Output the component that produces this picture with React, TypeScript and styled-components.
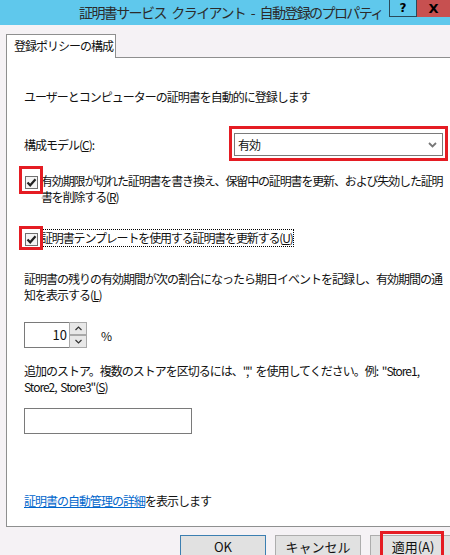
import React from 'react';
import styled, { createGlobalStyle } from 'styled-components';

const GlobalStyle = createGlobalStyle`
  html, body {
    margin: 0;
    padding: 0;
    background: #f5f2f5;
  }
  * {
    box-sizing: border-box;
  }
`;

const Window = styled.div`
  width: 450px;
  height: 555px;
  overflow: hidden;
  display: flex;
  flex-direction: column;
  background: #f5f2f5;
  font-family: "Noto Sans CJK JP", "Noto Sans", sans-serif;
  font-size: 12px;
  letter-spacing: -1px;
  word-spacing: 2px;
  color: #111;
`;

const TitleBar = styled.div`
  height: 25px;
  flex: 0 0 25px;
  background: #5fc8ec;
  display: flex;
  align-items: flex-start;
`;

const Title = styled.div`
  flex: 1;
  padding-left: 79px;
  padding-top: 3px;
  font-size: 14px;
  line-height: 18px;
  letter-spacing: -1.6px;
  word-spacing: 4px;
  color: #2b2b2b;
  white-space: nowrap;
`;

const CaptionButton = styled.div<{ $close?: boolean }>`
  height: 17px;
  width: ${(p) => (p.$close ? '33px' : '28px')};
  flex: 0 0 auto;
  display: flex;
  align-items: center;
  justify-content: center;
  font-family: "DejaVu Sans", sans-serif;
  font-weight: bold;
  font-size: ${(p) => (p.$close ? '13px' : '12px')};
  letter-spacing: 0;
  color: #000;
  background: ${(p) => (p.$close ? '#c75050' : 'transparent')};
  border: ${(p) => (p.$close ? 'none' : '1px solid #2a4a5a')};
  border-top: none;
`;

const Body = styled.div`
  flex: 1;
  display: flex;
  flex-direction: column;
  padding: 9px 0 0 6px;
`;

const TabStrip = styled.div`
  display: flex;
  position: relative;
  z-index: 1;
`;

const Tab = styled.div`
  width: 110px;
  height: 24px;
  background: #fff;
  border: 1px solid #8e8f8f;
  border-bottom: none;
  padding-left: 7px;
  line-height: 22px;
  white-space: nowrap;
`;

const Panel = styled.div`
  width: 460px;
  height: 470px;
  margin-top: -1px;
  background: #fff;
  border: 1px solid #8e8f8f;
  padding: 31px 0 0 17px;
  display: flex;
  flex-direction: column;
  align-items: flex-start;
`;

const Text = styled.div<{ $mt?: number }>`
  margin-top: ${(p) => p.$mt ?? 0}px;
  line-height: 16px;
  white-space: nowrap;
`;

const FieldRow = styled.div<{ $mt?: number }>`
  margin-top: ${(p) => p.$mt ?? 0}px;
  display: flex;
  align-items: center;
`;

const FieldLabel = styled.div`
  width: 210px;
  line-height: 16px;
  white-space: nowrap;
`;

const Marked = styled.div`
  position: relative;
`;

const RedMark = styled.div<{ $t: number; $r: number; $b: number; $l: number }>`
  position: absolute;
  top: ${(p) => p.$t}px;
  right: ${(p) => p.$r}px;
  bottom: ${(p) => p.$b}px;
  left: ${(p) => p.$l}px;
  border: 3px solid #e51c23;
  pointer-events: none;
  z-index: 2;
`;

const Select = styled.div`
  width: 209px;
  height: 23px;
  border: 1px solid #7a7a7a;
  background: #fff;
  display: flex;
  align-items: center;
  justify-content: space-between;
  padding: 0 5px 0 3px;
`;

const CheckRow = styled.div<{ $mt: number }>`
  margin-top: ${(p) => p.$mt}px;
  margin-left: 1px;
  display: flex;
  align-items: flex-start;
`;

const Box = styled.div`
  width: 13px;
  height: 13px;
  margin-top: 3px;
  margin-right: 2px;
  border: 1px solid #707070;
  background: #f4f4f4;
  display: flex;
  align-items: center;
  justify-content: center;
`;

const CheckLabel = styled.div<{ $focused?: boolean }>`
  line-height: 16px;
  white-space: nowrap;
  letter-spacing: -1.15px;
  border: 1px dotted ${(p) => (p.$focused ? '#000' : 'transparent')};
  margin-top: -1px;
`;

const Spinner = styled.div`
  margin-top: 19px;
  display: flex;
  align-items: center;
`;

const SpinField = styled.div`
  width: 45px;
  height: 26px;
  border: 1px solid #7a7a7a;
  border-right: none;
  background: #fff;
  text-align: right;
  padding-right: 2px;
  line-height: 24px;
  font-size: 13px;
  letter-spacing: 0;
`;

const SpinButtons = styled.div`
  display: flex;
  flex-direction: column;
`;

const SpinButton = styled.div`
  width: 18px;
  height: 13px;
  border: 1px solid #a9a9a9;
  background: #e8e8e8;
  display: flex;
  align-items: center;
  justify-content: center;
`;

const Percent = styled.span`
  margin-left: 14px;
  letter-spacing: 0;
`;

const TextInput = styled.div`
  margin-top: 13px;
  width: 168px;
  height: 26px;
  border: 1px solid #7a7a7a;
  background: #fff;
`;

const Link = styled.a`
  color: #0066cc;
  text-decoration: underline;
`;

const ButtonBar = styled.div`
  display: flex;
  gap: 9px;
  padding: 8px 0 0 174px;
`;

const Button = styled.div<{ $default?: boolean }>`
  width: 86px;
  height: 23px;
  flex: 0 0 86px;
  background: #e1e1e1;
  border: 1px solid ${(p) => (p.$default ? '#3c7fb1' : '#adadad')};
  display: flex;
  align-items: center;
  justify-content: center;
  letter-spacing: 0;
  font-size: 13px;
  white-space: nowrap;
`;

const Check = () => (
  <svg width="11" height="11" viewBox="0 0 11 11">
    <path d="M1.5 5.5 L4.2 8.3 L9.5 2.3" fill="none" stroke="#222" strokeWidth="2.2" />
  </svg>
);

const Chevron = ({ up }: { up?: boolean }) => (
  <svg width="7" height="5" viewBox="0 0 7 5">
    <path
      d={up ? 'M0.5 4 L3.5 1 L6.5 4' : 'M0.5 1 L3.5 4 L6.5 1'}
      fill="none"
      stroke="#333"
      strokeWidth="1.2"
    />
  </svg>
);

export default function App() {
  return (
    <>
      <GlobalStyle />
      <Window>
        <TitleBar>
          <Title>証明書サービス クライアント - 自動登録のプロパティ</Title>
          <CaptionButton>?</CaptionButton>
          <CaptionButton $close>X</CaptionButton>
        </TitleBar>
        <Body>
          <TabStrip>
            <Tab>登録ポリシーの構成</Tab>
          </TabStrip>
          <Panel>
            <Text>ユーザーとコンピューターの証明書を自動的に登録します</Text>
            <FieldRow $mt={28}>
              <FieldLabel>
                構成モデル(<u>C</u>):
              </FieldLabel>
              <Marked>
                <RedMark $t={-7} $r={-5} $b={-5} $l={-5} />
                <Select>
                  <span>有効</span>
                  <svg width="9" height="6" viewBox="0 0 9 6">
                    <path d="M1 1 L4.5 4.5 L8 1" fill="none" stroke="#777" strokeWidth="1.8" />
                  </svg>
                </Select>
              </Marked>
            </FieldRow>
            <CheckRow $mt={17}>
              <Marked>
                <RedMark $t={-7} $r={-3} $b={-5} $l={-6} />
                <Box>
                  <Check />
                </Box>
              </Marked>
              <CheckLabel>
                有効期限が切れた証明書を書き換え、保留中の証明書を更新、および失効した証明
                <br />
                書を削除する(<u>R</u>)
              </CheckLabel>
            </CheckRow>
            <CheckRow $mt={24}>
              <Marked>
                <RedMark $t={-4} $r={-3} $b={-4} $l={-6} />
                <Box>
                  <Check />
                </Box>
              </Marked>
              <CheckLabel $focused>
                証明書テンプレートを使用する証明書を更新する(<u>U</u>)
              </CheckLabel>
            </CheckRow>
            <Text $mt={24}>
              証明書の残りの有効期間が次の割合になったら期日イベントを記録し、有効期間の通
              <br />
              知を表示する(<u>L</u>)
            </Text>
            <Spinner>
              <SpinField>10</SpinField>
              <SpinButtons>
                <SpinButton>
                  <Chevron up />
                </SpinButton>
                <SpinButton>
                  <Chevron />
                </SpinButton>
              </SpinButtons>
              <Percent>%</Percent>
            </Spinner>
            <Text $mt={15}>
              追加のストア。複数のストアを区切るには、"," を使用してください。例: "Store1,
              <br />
              Store2, Store3"(<u>S</u>)
            </Text>
            <TextInput />
            <Text $mt={59}>
              <Link>証明書の自動管理の詳細</Link>を表示します
            </Text>
          </Panel>
          <ButtonBar>
            <Button $default>OK</Button>
            <Button>キャンセル</Button>
            <Marked>
              <RedMark $t={-4} $r={12} $b={-4} $l={10} />
              <Button>適用(A)</Button>
            </Marked>
          </ButtonBar>
        </Body>
      </Window>
    </>
  );
}
